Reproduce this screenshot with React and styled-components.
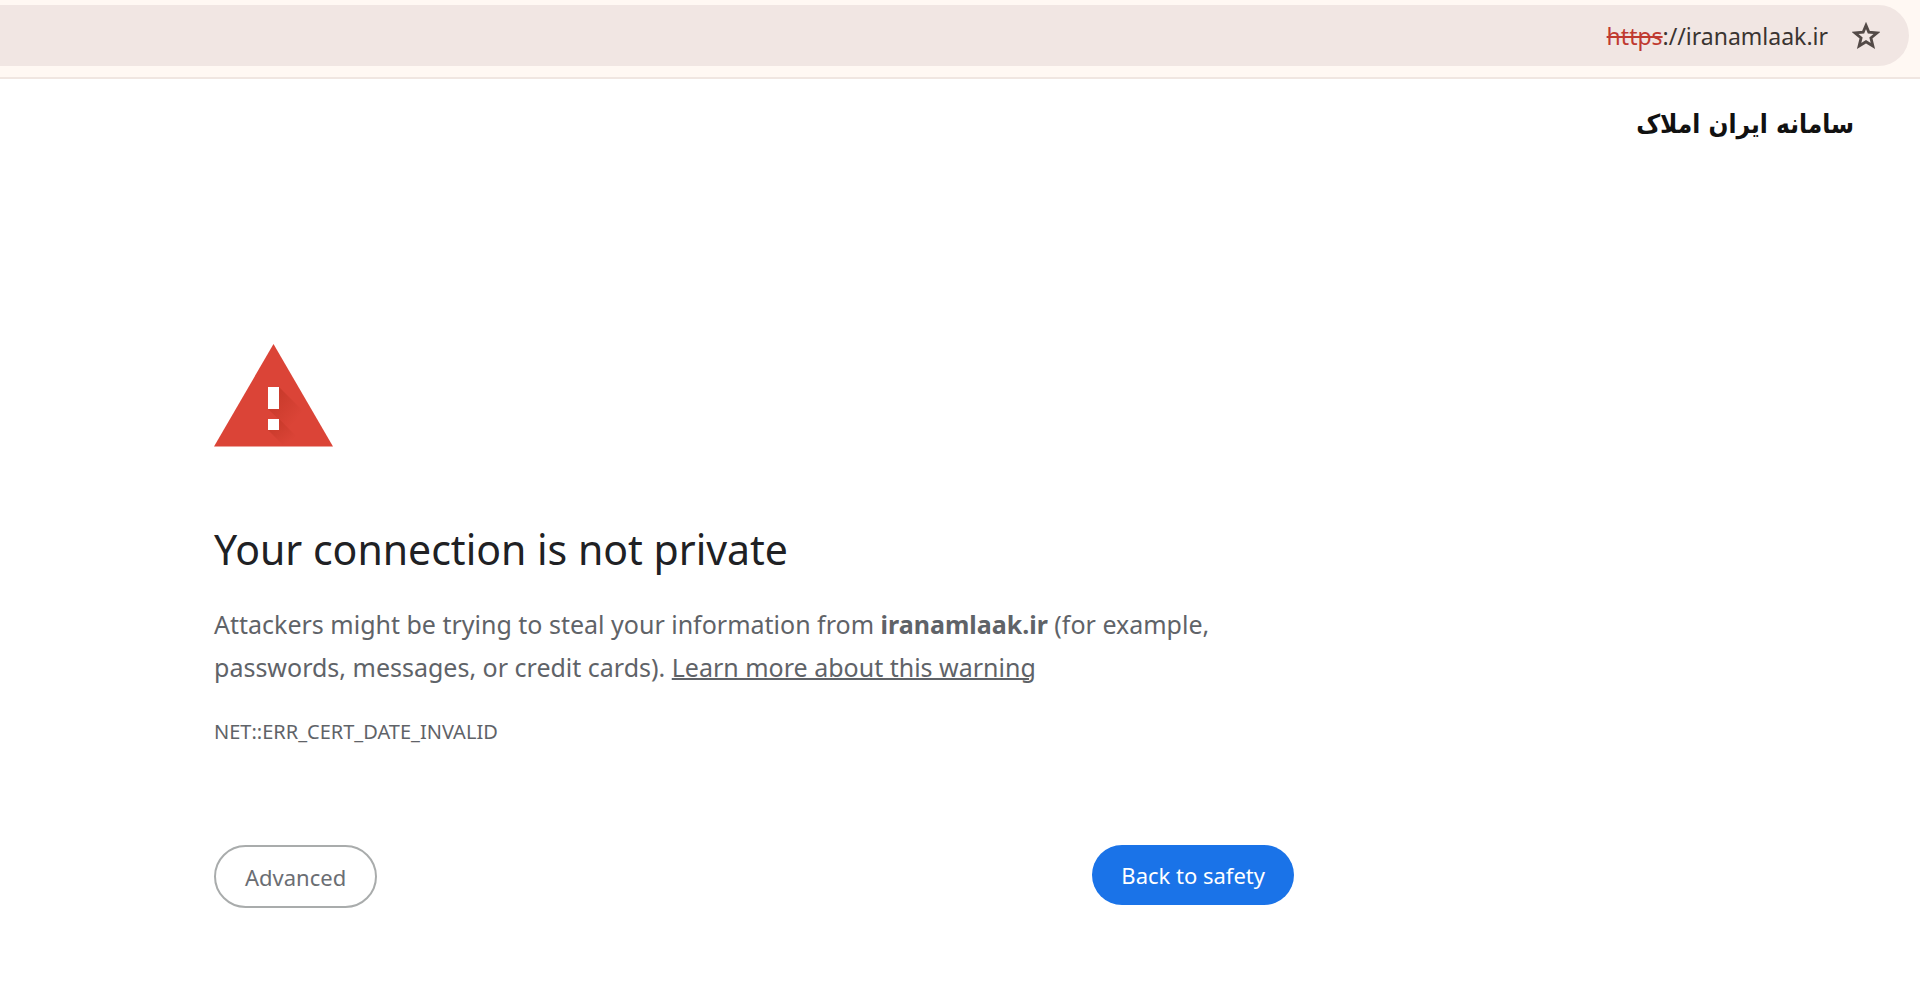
import React from "react";
import styled, { createGlobalStyle } from "styled-components";

const GlobalStyle = createGlobalStyle`
  * { box-sizing: border-box; }
  body {
    margin: 0;
    background: #fff;
    color: #5f6368;
    font-family: "Noto Sans", "Open Sans", sans-serif;
  }
`;

const Toolbar = styled.header`
  padding: 5px 11px 11px 0;
  background: #fff8f3;
  border-bottom: 2px solid #f0e6e1;
`;

const AddressBar = styled.div`
  display: flex;
  align-items: center;
  justify-content: flex-end;
  gap: 24px;
  height: 61px;
  padding-right: 29px;
  background: #f1e6e3;
  border-radius: 0 31px 31px 0;
`;

const Url = styled.span`
  color: #3a3431;
  font-size: 23px;
  line-height: 32px;
`;

const Scheme = styled.s`
  color: #c03a30;
  text-decoration-thickness: 2px;
`;

const StarButton = styled.button`
  display: flex;
  padding: 0;
  border: 0;
  background: none;
  cursor: pointer;
`;

const SiteTitle = styled.div`
  padding: 25px 66px 0 0;
  color: #111;
  font-family: "DejaVu Sans Condensed", "DejaVu Sans", sans-serif;
  font-size: 26px;
  font-weight: 700;
  line-height: 40px;
`;

const Warning = styled.main`
  max-width: 1294px;
  padding: 200px 0 40px 214px;
`;

const WarningIcon = styled.svg`
  display: block;
`;

const Heading = styled.h1`
  margin: 75px 0 0;
  color: #202124;
  font-size: 41px;
  font-weight: 400;
  line-height: 54px;
`;

const Message = styled.p`
  margin: 27px 0 0;
  font-size: 25px;
  line-height: 43px;
`;

const LearnMore = styled.a`
  color: inherit;
  text-decoration-thickness: 2px;
`;

const ErrorCode = styled.p`
  margin: 27px 0 0;
  font-size: 20px;
  line-height: 32px;
`;

const Actions = styled.div`
  display: flex;
  align-items: flex-start;
  justify-content: space-between;
  margin-top: 97px;
`;

const Button = styled.button`
  height: ${(p) => (p.$primary ? 60 : 63)}px;
  padding: 0 29px;
  border: ${(p) => (p.$primary ? "0" : "2px solid #a9acac")};
  border-radius: 32px;
  background: ${(p) => (p.$primary ? "#1a73e8" : "#fff")};
  color: ${(p) => (p.$primary ? "#fff" : "#6b6e73")};
  font-family: inherit;
  font-size: 22px;
  line-height: 32px;
  cursor: pointer;
`;

export default function App() {
  return (
    <>
      <GlobalStyle />
      <Toolbar>
        <AddressBar>
          <Url>
            <Scheme>https</Scheme>://iranamlaak.ir
          </Url>
          <StarButton aria-label="Bookmark this page">
            <svg width="28" height="27" viewBox="0 0 28 27" fill="none" stroke="#534a47" strokeWidth="2.8">
              <path d="M14 3.400 L16.800 10.100 L25 10.900 L18.900 15.900 L20.900 24 L14 19.700 L7.100 24 L9.100 15.900 L3 10.900 L11.200 10.100 Z" />
            </svg>
          </StarButton>
        </AddressBar>
      </Toolbar>
      <SiteTitle dir="rtl" lang="fa">
        سامانه ایران املاک
      </SiteTitle>
      <Warning>
        <WarningIcon width="119" height="103" viewBox="0 0 119 103" aria-hidden="true">
          <defs>
            <linearGradient id="shade" x1="0" y1="0" x2="1" y2="1">
              <stop offset="0" stopColor="#a52714" stopOpacity="0.45" />
              <stop offset="0.7" stopColor="#a52714" stopOpacity="0" />
            </linearGradient>
          </defs>
          <path d="M59.500 0 L119 102.500 H0 Z" fill="#db4437" />
          <path d="M65 43 L93 71 V92 H82 L54 65 H65 Z" fill="url(#shade)" />
          <path d="M65 75 L92 102 H70 L54 86 H65 Z" fill="url(#shade)" />
          <path d="M54 43 H65 V65 H54 Z M54 75 H65 V86 H54 Z" fill="#fff" />
        </WarningIcon>
        <Heading>Your connection is not private</Heading>
        <Message>
          Attackers might be trying to steal your information from <strong>iranamlaak.ir</strong> (for example,
          passwords, messages, or credit cards). <LearnMore href="#learn-more">Learn more about this warning</LearnMore>
        </Message>
        <ErrorCode>NET::ERR_CERT_DATE_INVALID</ErrorCode>
        <Actions>
          <Button>Advanced</Button>
          <Button $primary>Back to safety</Button>
        </Actions>
      </Warning>
    </>
  );
}
